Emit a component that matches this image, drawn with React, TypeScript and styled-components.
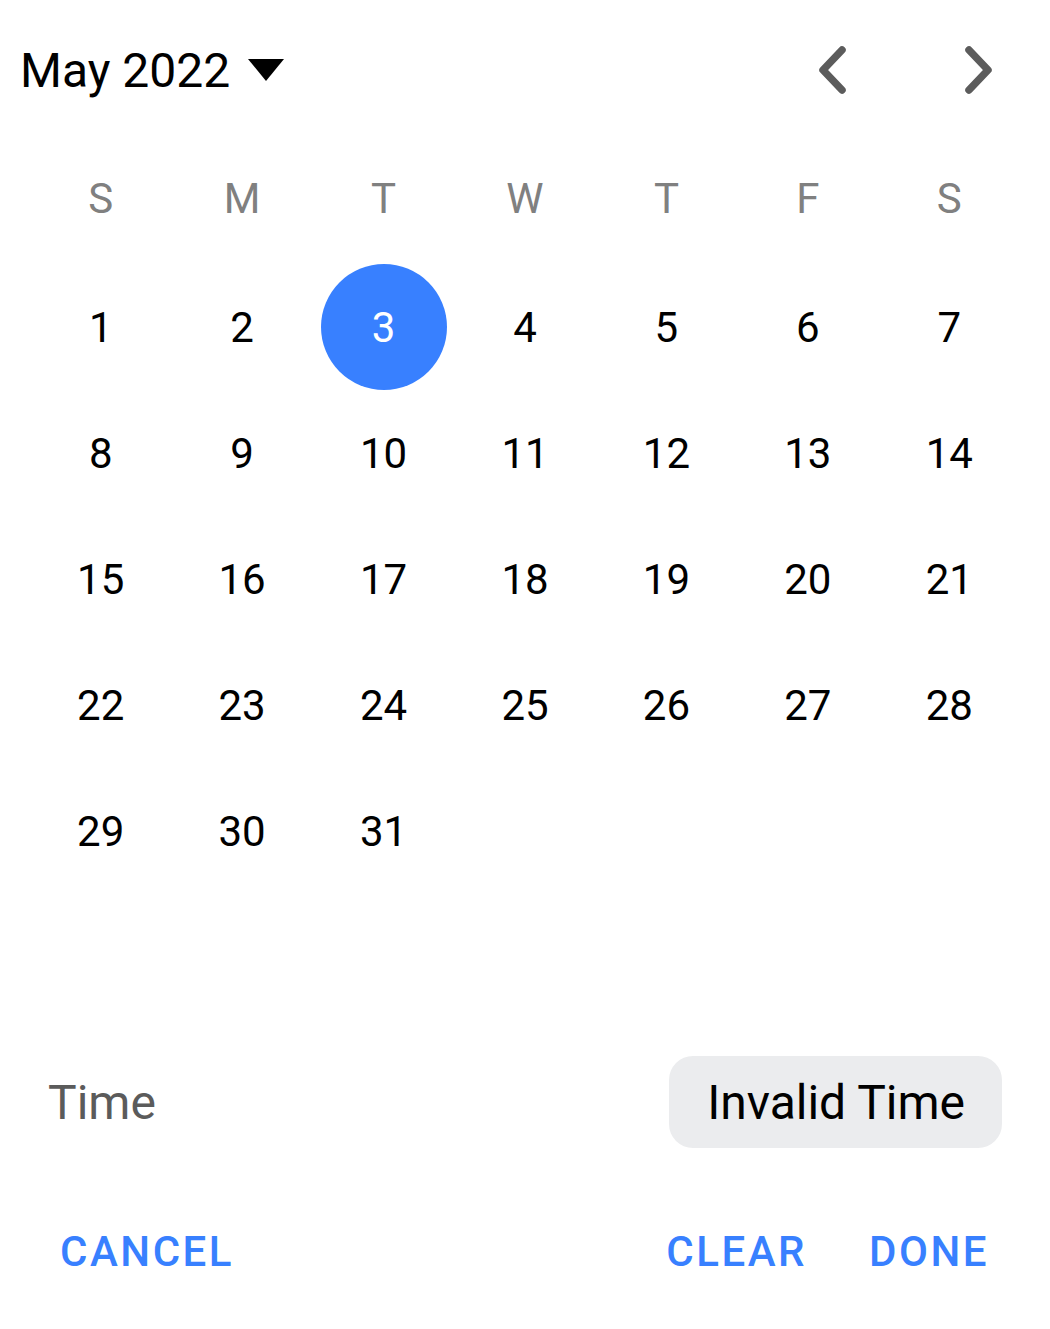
import { FC } from "react";
import styled, { createGlobalStyle } from "styled-components";

const colors = {
  primary: "#3880ff",
  text: "#000000",
  muted: "#808080",
  label: "#5b5b5b",
  nav: "#5c5c5c",
  pill: "#ebecee",
  white: "#ffffff",
};

const GlobalStyle = createGlobalStyle`
  html, body {
    margin: 0;
    padding: 0;
    background: ${colors.white};
    font-family: Roboto, "Noto Sans", "Liberation Sans", sans-serif;
    -webkit-font-smoothing: antialiased;
  }
  * { box-sizing: border-box; }
`;

const Picker = styled.div`
  width: 1050px;
  display: flex;
  flex-direction: column;
  color: ${colors.text};
`;

const Header = styled.div`
  height: 140px;
  display: flex;
  align-items: center;
  justify-content: space-between;
  padding: 0 22px 0 20px;
`;

const MonthButton = styled.button`
  display: flex;
  align-items: center;
  gap: 18px;
  border: 0;
  background: none;
  padding: 0;
  font-family: inherit;
  font-size: 48px;
  color: ${colors.text};
  cursor: pointer;
`;

const NavGroup = styled.div`
  display: flex;
  align-items: center;
  gap: 45px;
`;

const NavButton = styled.button`
  width: 100px;
  height: 100px;
  display: flex;
  align-items: center;
  justify-content: center;
  border: 0;
  background: none;
  padding: 0;
  color: ${colors.nav};
  cursor: pointer;
`;

const WeekdayRow = styled.div`
  display: grid;
  grid-template-columns: repeat(7, 1fr);
  margin: 28px 30px 0;
  height: 60px;
`;

const Weekday = styled.div`
  display: flex;
  align-items: center;
  justify-content: center;
  font-size: 42px;
  color: ${colors.muted};
`;

const DayGrid = styled.div`
  display: grid;
  grid-template-columns: repeat(7, 1fr);
  grid-auto-rows: 126px;
  margin: 36px 30px 0;
`;

const DayCell = styled.div`
  display: flex;
  align-items: center;
  justify-content: center;
`;

const Day = styled.button<{ $active?: boolean }>`
  width: 126px;
  height: 126px;
  border-radius: 50%;
  border: 0;
  padding: 0;
  display: flex;
  align-items: center;
  justify-content: center;
  font-family: inherit;
  font-size: 42px;
  background: ${(p) => (p.$active ? colors.primary : "transparent")};
  color: ${(p) => (p.$active ? colors.white : colors.text)};
  cursor: pointer;
`;

const TimeRow = styled.div`
  display: flex;
  align-items: center;
  justify-content: space-between;
  margin-top: 36px;
  padding: 0 48px;
  height: 92px;
`;

const TimeLabel = styled.span`
  font-size: 48px;
  color: ${colors.label};
`;

const TimePill = styled.button`
  height: 92px;
  padding: 0 37px 0 38px;
  border: 0;
  border-radius: 24px;
  background: ${colors.pill};
  font-family: inherit;
  font-size: 48px;
  color: ${colors.text};
`;

const ButtonRow = styled.div`
  display: flex;
  align-items: center;
  justify-content: space-between;
  margin-top: 55px;
  padding: 0 37px 0 36px;
  height: 96px;
`;

const ActionGroup = styled.div`
  display: flex;
  gap: 14px;
`;

const ActionButton = styled.button`
  height: 96px;
  padding: 0 24px;
  border: 0;
  background: none;
  font-family: inherit;
  font-size: 42px;
  font-weight: 500;
  letter-spacing: 0.06em;
  color: ${colors.primary};
  cursor: pointer;
`;

const Caret = () => (
  <svg width="36" height="22" viewBox="0 0 36 22">
    <path d="M0 0 L36 0 L18 22 Z" fill="#000" />
  </svg>
);

const Chevron: FC<{ dir: "left" | "right" }> = ({ dir }) => (
  <svg width="40" height="56" viewBox="0 0 40 56">
    <path
      d={dir === "left" ? "M29 8 L10 28 L29 48" : "M11 8 L30 28 L11 48"}
      fill="none"
      stroke="currentColor"
      strokeWidth="7.5"
      strokeLinecap="round"
      strokeLinejoin="round"
    />
  </svg>
);

const weekdays = ["S", "M", "T", "W", "T", "F", "S"];
const firstOffset = 0;
const daysInMonth = 31;
const selected = 3;

const App: FC = () => {
  const cells: (number | null)[] = [];
  for (let i = 0; i < firstOffset; i++) cells.push(null);
  for (let d = 1; d <= daysInMonth; d++) cells.push(d);
  while (cells.length < 42) cells.push(null);

  return (
    <>
      <GlobalStyle />
      <Picker>
        <Header>
          <MonthButton>
            May 2022
            <Caret />
          </MonthButton>
          <NavGroup>
            <NavButton aria-label="previous month">
              <Chevron dir="left" />
            </NavButton>
            <NavButton aria-label="next month">
              <Chevron dir="right" />
            </NavButton>
          </NavGroup>
        </Header>
        <WeekdayRow>
          {weekdays.map((w, i) => (
            <Weekday key={i}>{w}</Weekday>
          ))}
        </WeekdayRow>
        <DayGrid>
          {cells.map((d, i) => (
            <DayCell key={i}>{d !== null && <Day $active={d === selected}>{d}</Day>}</DayCell>
          ))}
        </DayGrid>
        <TimeRow>
          <TimeLabel>Time</TimeLabel>
          <TimePill>Invalid Time</TimePill>
        </TimeRow>
        <ButtonRow>
          <ActionButton>CANCEL</ActionButton>
          <ActionGroup>
            <ActionButton>CLEAR</ActionButton>
            <ActionButton>DONE</ActionButton>
          </ActionGroup>
        </ButtonRow>
      </Picker>
    </>
  );
};

export default App;
